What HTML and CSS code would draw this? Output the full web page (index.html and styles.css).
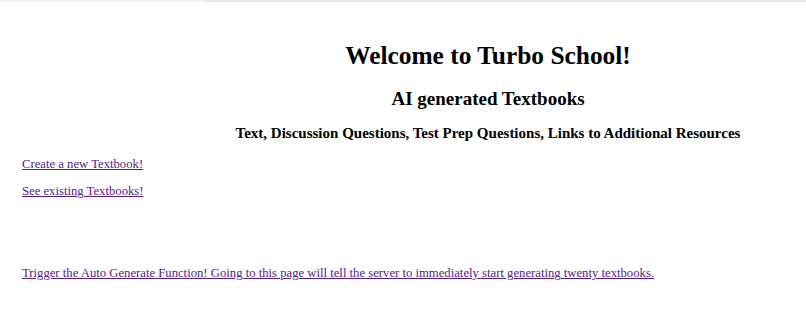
FILE: index.html
```html
<!DOCTYPE html>
<html>
	<head>
		<link rel="stylesheet" href="styles.css">
		<title>Turbo School</title>
	</head>
	<body>
		<div class="topbar"><div class="topbar-left"></div><div class="topbar-right"></div></div>
		<div class="header">
			<h1>Welcome to Turbo School!</h1>
			<h2>AI generated Textbooks</h2>
			<h3>Text, Discussion Questions, Test Prep Questions, Links to Additional Resources</h3>
		</div>
		<div class="links">
			<p><a href="#create">Create a new Textbook!</a></p>
			<p><a href="#existing">See existing Textbooks!</a></p>
		</div>
		<div class="trigger">
			<p><a href="#auto">Trigger the Auto Generate Function! Going to this page will tell the server to immediately start generating twenty textbooks.</a></p>
		</div>
	</body>
</html>
```
FILE: styles.css
```css
body {
	margin: 0;
	background-color: #ffffff;
	color: #000000;
	font-family: "Liberation Serif", "Times New Roman", serif;
}
.topbar {
	display: flex;
	height: 2px;
}
.topbar-left {
	width: 207px;
	background-color: #f1f1f1;
}
.topbar-right {
	flex: 1;
	background-color: #e3e3e3;
}
.header {
	padding-left: 170px;
	text-align: center;
}
h1 {
	font-size: 25.4px;
	margin: 38px 0 0 0;
	line-height: 30px;
}
h2 {
	font-size: 19px;
	margin: 18px 0 0 0;
	line-height: 22px;
}
h3 {
	font-size: 15px;
	margin: 15px 0 0 0;
	line-height: 17px;
}
.links, .trigger {
	padding-left: 22px;
	font-size: 12.7px;
}
.links p, .trigger p {
	margin: 0;
	line-height: 15px;
}
.links {
	margin-top: 15px;
}
.links p + p {
	margin-top: 12px;
}
.trigger {
	margin-top: 67px;
}
a {
	color: #551a8b;
}
```
